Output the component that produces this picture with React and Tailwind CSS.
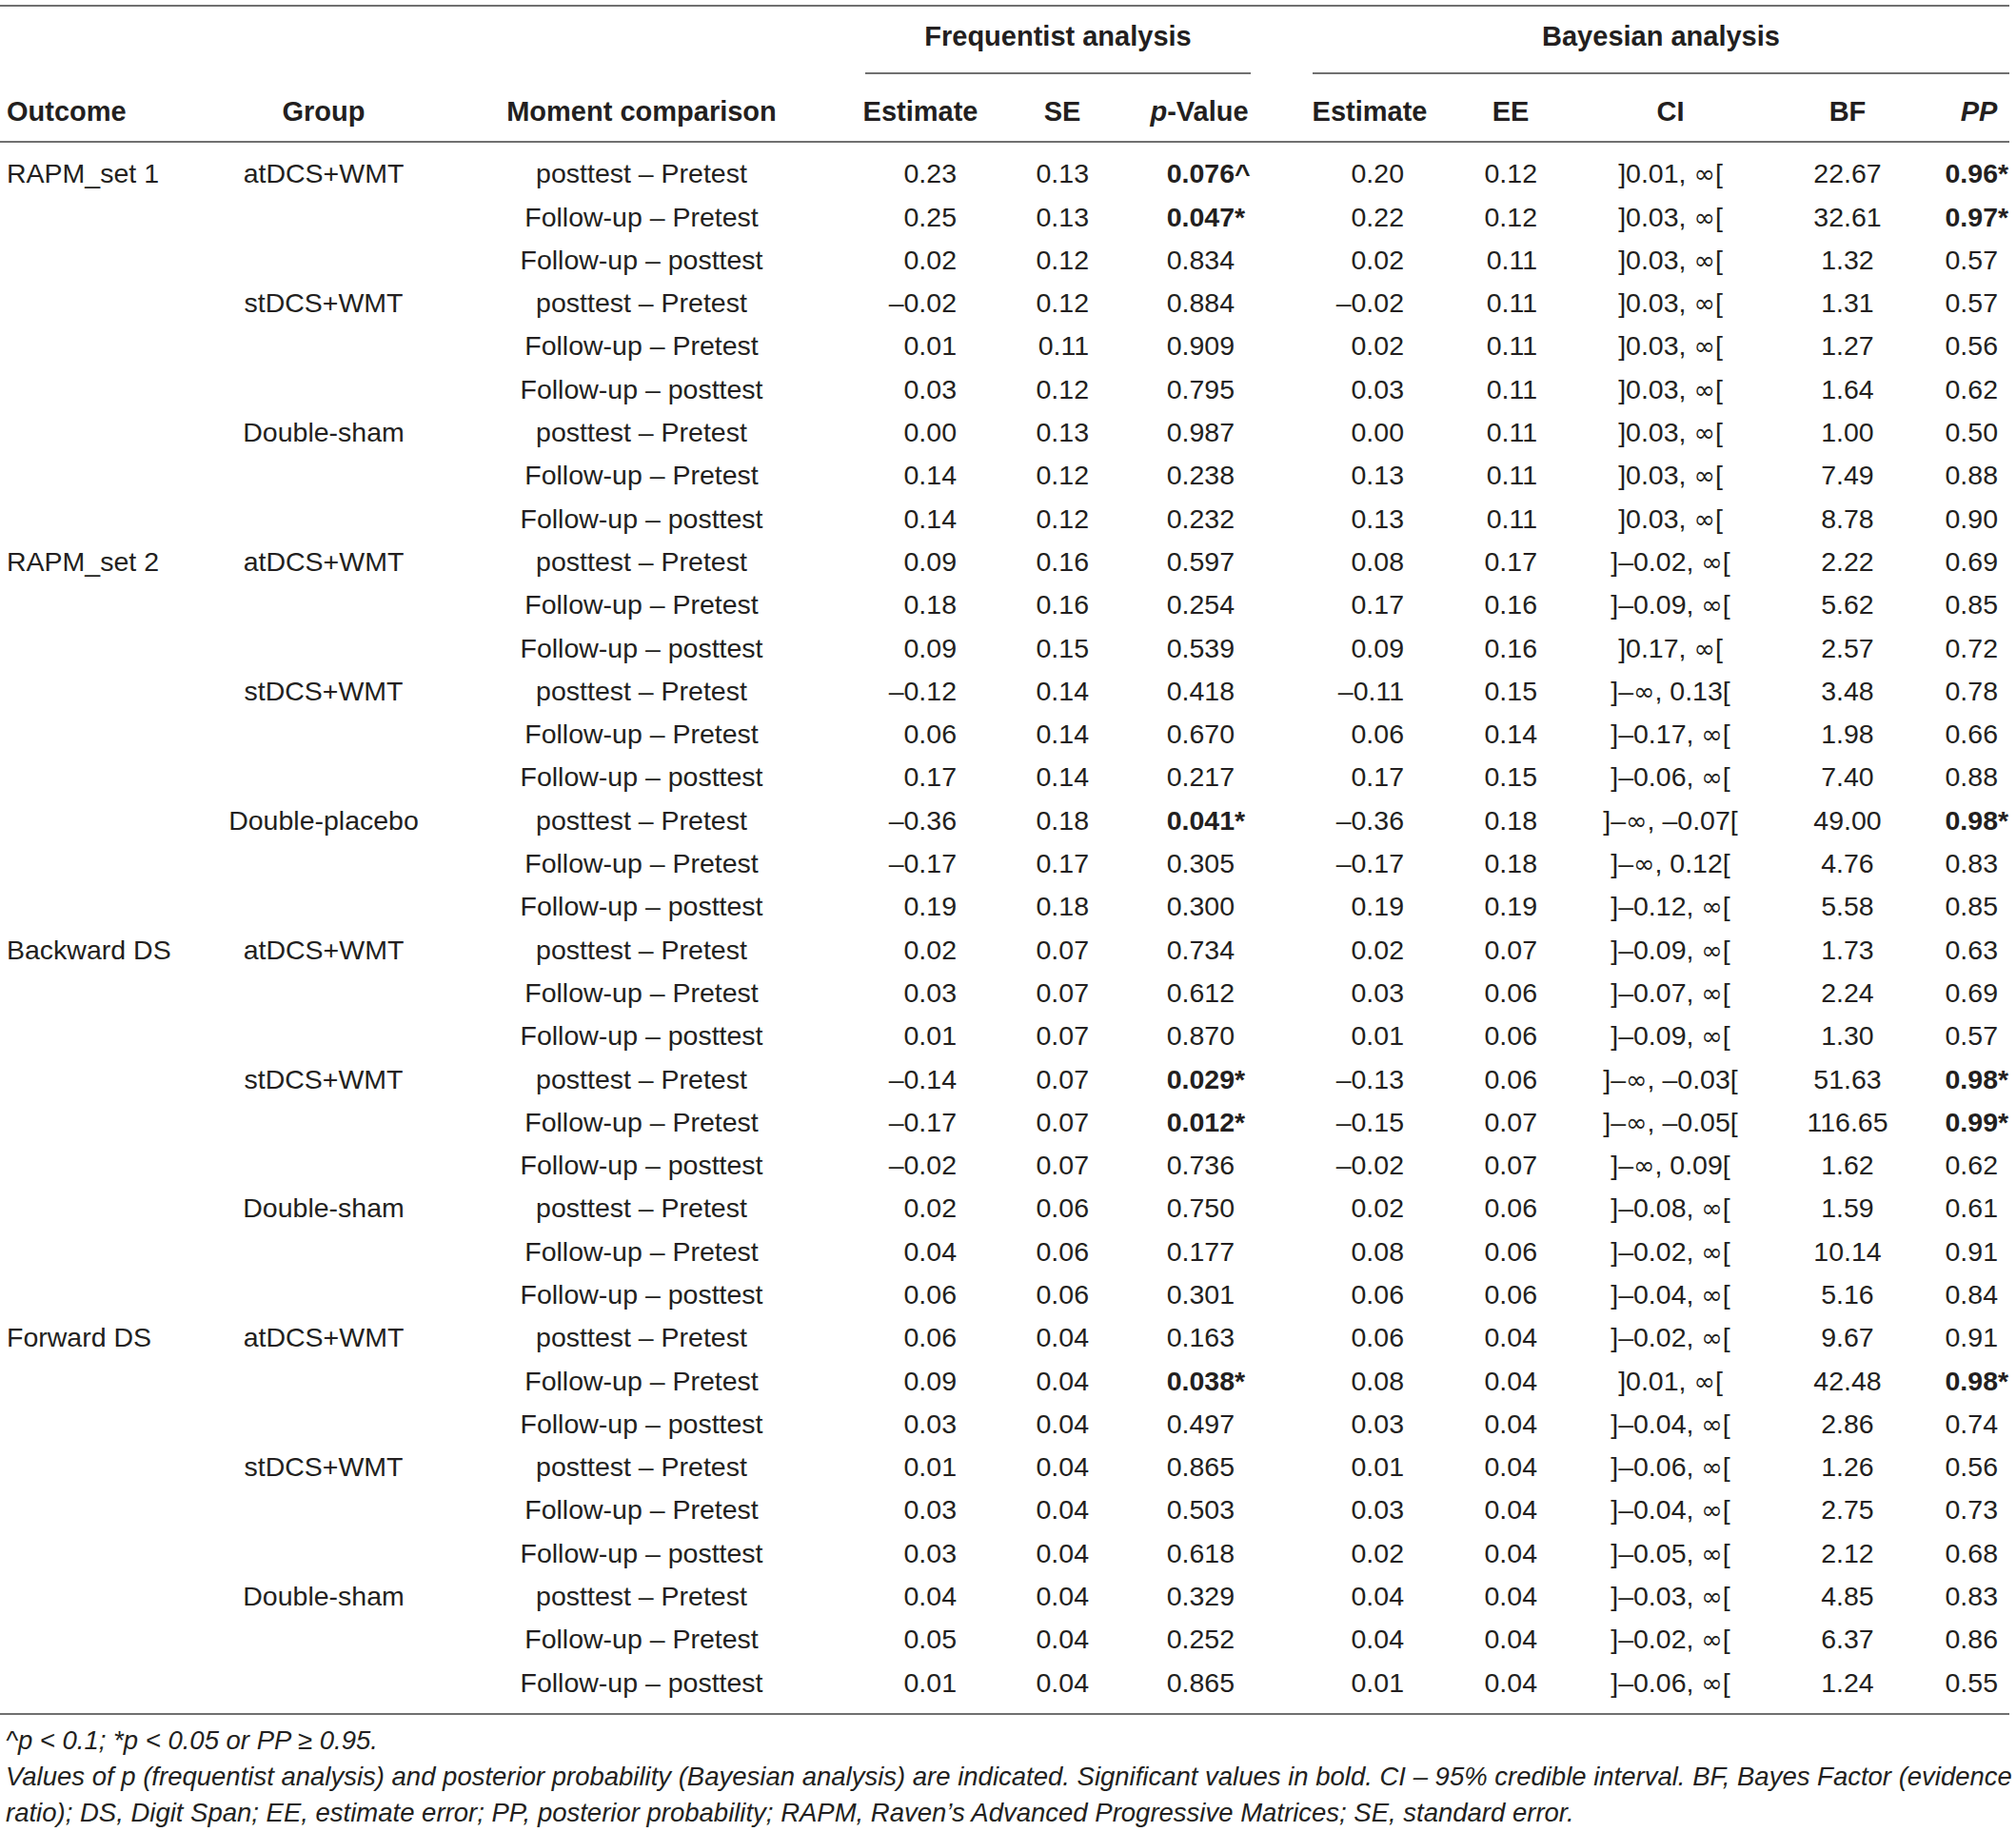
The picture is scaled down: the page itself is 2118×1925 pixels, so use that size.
const rows = [
  ["RAPM_set 1", "atDCS+WMT", "posttest – Pretest", "0.23", "0.13", ["0.076", "^"], "0.20", "0.12", "]0.01, ∞[", "22.67", ["0.96", "*"]],
  ["", "", "Follow-up – Pretest", "0.25", "0.13", ["0.047", "*"], "0.22", "0.12", "]0.03, ∞[", "32.61", ["0.97", "*"]],
  ["", "", "Follow-up – posttest", "0.02", "0.12", "0.834", "0.02", "0.11", "]0.03, ∞[", "1.32", "0.57"],
  ["", "stDCS+WMT", "posttest – Pretest", "–0.02", "0.12", "0.884", "–0.02", "0.11", "]0.03, ∞[", "1.31", "0.57"],
  ["", "", "Follow-up – Pretest", "0.01", "0.11", "0.909", "0.02", "0.11", "]0.03, ∞[", "1.27", "0.56"],
  ["", "", "Follow-up – posttest", "0.03", "0.12", "0.795", "0.03", "0.11", "]0.03, ∞[", "1.64", "0.62"],
  ["", "Double-sham", "posttest – Pretest", "0.00", "0.13", "0.987", "0.00", "0.11", "]0.03, ∞[", "1.00", "0.50"],
  ["", "", "Follow-up – Pretest", "0.14", "0.12", "0.238", "0.13", "0.11", "]0.03, ∞[", "7.49", "0.88"],
  ["", "", "Follow-up – posttest", "0.14", "0.12", "0.232", "0.13", "0.11", "]0.03, ∞[", "8.78", "0.90"],
  ["RAPM_set 2", "atDCS+WMT", "posttest – Pretest", "0.09", "0.16", "0.597", "0.08", "0.17", "]–0.02, ∞[", "2.22", "0.69"],
  ["", "", "Follow-up – Pretest", "0.18", "0.16", "0.254", "0.17", "0.16", "]–0.09, ∞[", "5.62", "0.85"],
  ["", "", "Follow-up – posttest", "0.09", "0.15", "0.539", "0.09", "0.16", "]0.17, ∞[", "2.57", "0.72"],
  ["", "stDCS+WMT", "posttest – Pretest", "–0.12", "0.14", "0.418", "–0.11", "0.15", "]–∞, 0.13[", "3.48", "0.78"],
  ["", "", "Follow-up – Pretest", "0.06", "0.14", "0.670", "0.06", "0.14", "]–0.17, ∞[", "1.98", "0.66"],
  ["", "", "Follow-up – posttest", "0.17", "0.14", "0.217", "0.17", "0.15", "]–0.06, ∞[", "7.40", "0.88"],
  ["", "Double-placebo", "posttest – Pretest", "–0.36", "0.18", ["0.041", "*"], "–0.36", "0.18", "]–∞, –0.07[", "49.00", ["0.98", "*"]],
  ["", "", "Follow-up – Pretest", "–0.17", "0.17", "0.305", "–0.17", "0.18", "]–∞, 0.12[", "4.76", "0.83"],
  ["", "", "Follow-up – posttest", "0.19", "0.18", "0.300", "0.19", "0.19", "]–0.12, ∞[", "5.58", "0.85"],
  ["Backward DS", "atDCS+WMT", "posttest – Pretest", "0.02", "0.07", "0.734", "0.02", "0.07", "]–0.09, ∞[", "1.73", "0.63"],
  ["", "", "Follow-up – Pretest", "0.03", "0.07", "0.612", "0.03", "0.06", "]–0.07, ∞[", "2.24", "0.69"],
  ["", "", "Follow-up – posttest", "0.01", "0.07", "0.870", "0.01", "0.06", "]–0.09, ∞[", "1.30", "0.57"],
  ["", "stDCS+WMT", "posttest – Pretest", "–0.14", "0.07", ["0.029", "*"], "–0.13", "0.06", "]–∞, –0.03[", "51.63", ["0.98", "*"]],
  ["", "", "Follow-up – Pretest", "–0.17", "0.07", ["0.012", "*"], "–0.15", "0.07", "]–∞, –0.05[", "116.65", ["0.99", "*"]],
  ["", "", "Follow-up – posttest", "–0.02", "0.07", "0.736", "–0.02", "0.07", "]–∞, 0.09[", "1.62", "0.62"],
  ["", "Double-sham", "posttest – Pretest", "0.02", "0.06", "0.750", "0.02", "0.06", "]–0.08, ∞[", "1.59", "0.61"],
  ["", "", "Follow-up – Pretest", "0.04", "0.06", "0.177", "0.08", "0.06", "]–0.02, ∞[", "10.14", "0.91"],
  ["", "", "Follow-up – posttest", "0.06", "0.06", "0.301", "0.06", "0.06", "]–0.04, ∞[", "5.16", "0.84"],
  ["Forward DS", "atDCS+WMT", "posttest – Pretest", "0.06", "0.04", "0.163", "0.06", "0.04", "]–0.02, ∞[", "9.67", "0.91"],
  ["", "", "Follow-up – Pretest", "0.09", "0.04", ["0.038", "*"], "0.08", "0.04", "]0.01, ∞[", "42.48", ["0.98", "*"]],
  ["", "", "Follow-up – posttest", "0.03", "0.04", "0.497", "0.03", "0.04", "]–0.04, ∞[", "2.86", "0.74"],
  ["", "stDCS+WMT", "posttest – Pretest", "0.01", "0.04", "0.865", "0.01", "0.04", "]–0.06, ∞[", "1.26", "0.56"],
  ["", "", "Follow-up – Pretest", "0.03", "0.04", "0.503", "0.03", "0.04", "]–0.04, ∞[", "2.75", "0.73"],
  ["", "", "Follow-up – posttest", "0.03", "0.04", "0.618", "0.02", "0.04", "]–0.05, ∞[", "2.12", "0.68"],
  ["", "Double-sham", "posttest – Pretest", "0.04", "0.04", "0.329", "0.04", "0.04", "]–0.03, ∞[", "4.85", "0.83"],
  ["", "", "Follow-up – Pretest", "0.05", "0.04", "0.252", "0.04", "0.04", "]–0.02, ∞[", "6.37", "0.86"],
  ["", "", "Follow-up – posttest", "0.01", "0.04", "0.865", "0.01", "0.04", "]–0.06, ∞[", "1.24", "0.55"],
];

// cell alignment per column (values)
const cols = [
  "pl-[7px] text-left",
  "text-center",
  "text-center",
  "text-right pr-[61px]",
  "text-right pr-[22px]",
  "text-right pr-[57px]",
  "text-right pr-[49px]",
  "text-right pr-[35px]",
  "text-center",
  "text-center",
  "text-right pr-[12px]",
];

const grid =
  "grid grid-cols-[200px_280px_388px_198px_100px_188px_170px_126px_210px_162px_89px]";

function Value({ v }) {
  if (Array.isArray(v)) {
    return (
      <span className="font-bold">
        {v[0]}
        <span className="inline-block w-0">{v[1]}</span>
      </span>
    );
  }
  if (v.includes("∞")) {
    const parts = v.split("∞");
    return (
      <>
        {parts[0]}
        <span className="font-['DejaVu_Sans'] text-[27px]">∞</span>
        {parts[1]}
      </>
    );
  }
  return v;
}

export default function App() {
  return (
    <div className="min-h-screen bg-white text-[#231f20] font-['Liberation_Sans',Arial,sans-serif]">
      <div className="w-[2111px] pt-[5px]">
        <div className="border-t-2 border-[#707070]" />

        {/* group headers */}
        <div className={`${grid} text-[29px] font-bold`}>
          <div className="col-span-3" />
          <div className="col-span-3 h-[71px] flex items-center justify-center pb-[6px] ml-[41px] mr-[40px] border-b-2 border-[#707070]">
            Frequentist analysis
          </div>
          <div className="col-span-5 h-[71px] flex items-center justify-center pb-[6px] ml-[25px] border-b-2 border-[#707070]">
            Bayesian analysis
          </div>
        </div>

        {/* column headers */}
        <div className={`${grid} text-[29px] font-bold h-[72px] items-center pt-[9px] border-b-2 border-[#707070]`}>
          <div className="pl-[7px]">Outcome</div>
          <div className="text-center">Group</div>
          <div className="text-center">Moment comparison</div>
          <div className="text-center">Estimate</div>
          <div className="text-center">SE</div>
          <div className="text-center">
            <i>p</i>-Value
          </div>
          <div className="text-center">Estimate</div>
          <div className="text-center">EE</div>
          <div className="text-center">CI</div>
          <div className="text-center">BF</div>
          <div className="text-center pl-[25px]">
            <i>PP</i>
          </div>
        </div>

        {/* body */}
        <div className="pt-[10px] pb-[9px] border-b-2 border-[#707070] text-[28.5px]">
          {rows.map((r, i) => (
            <div key={i} className={`${grid} h-[45.3px] items-center whitespace-nowrap`}>
              {r.map((v, j) => (
                <div key={j} className={cols[j]}>
                  <Value v={v} />
                </div>
              ))}
            </div>
          ))}
        </div>

        {/* footnotes */}
        <div className="pl-[6px] pt-[8px] italic text-[27.5px] leading-[38px] whitespace-nowrap">
          <p>
            ^<i>p</i> &lt; 0.1; *<i>p</i> &lt; 0.05 or PP ≥ 0.95.
          </p>
          <p>
            Values of p (frequentist analysis) and posterior probability (Bayesian analysis) are indicated. Significant
            values in bold. CI – 95% credible interval. BF, Bayes Factor (evidence
          </p>
          <p>
            ratio); DS, Digit Span; EE, estimate error; PP, posterior probability; RAPM, Raven’s Advanced Progressive
            Matrices; SE, standard error.
          </p>
        </div>
      </div>
    </div>
  );
}
